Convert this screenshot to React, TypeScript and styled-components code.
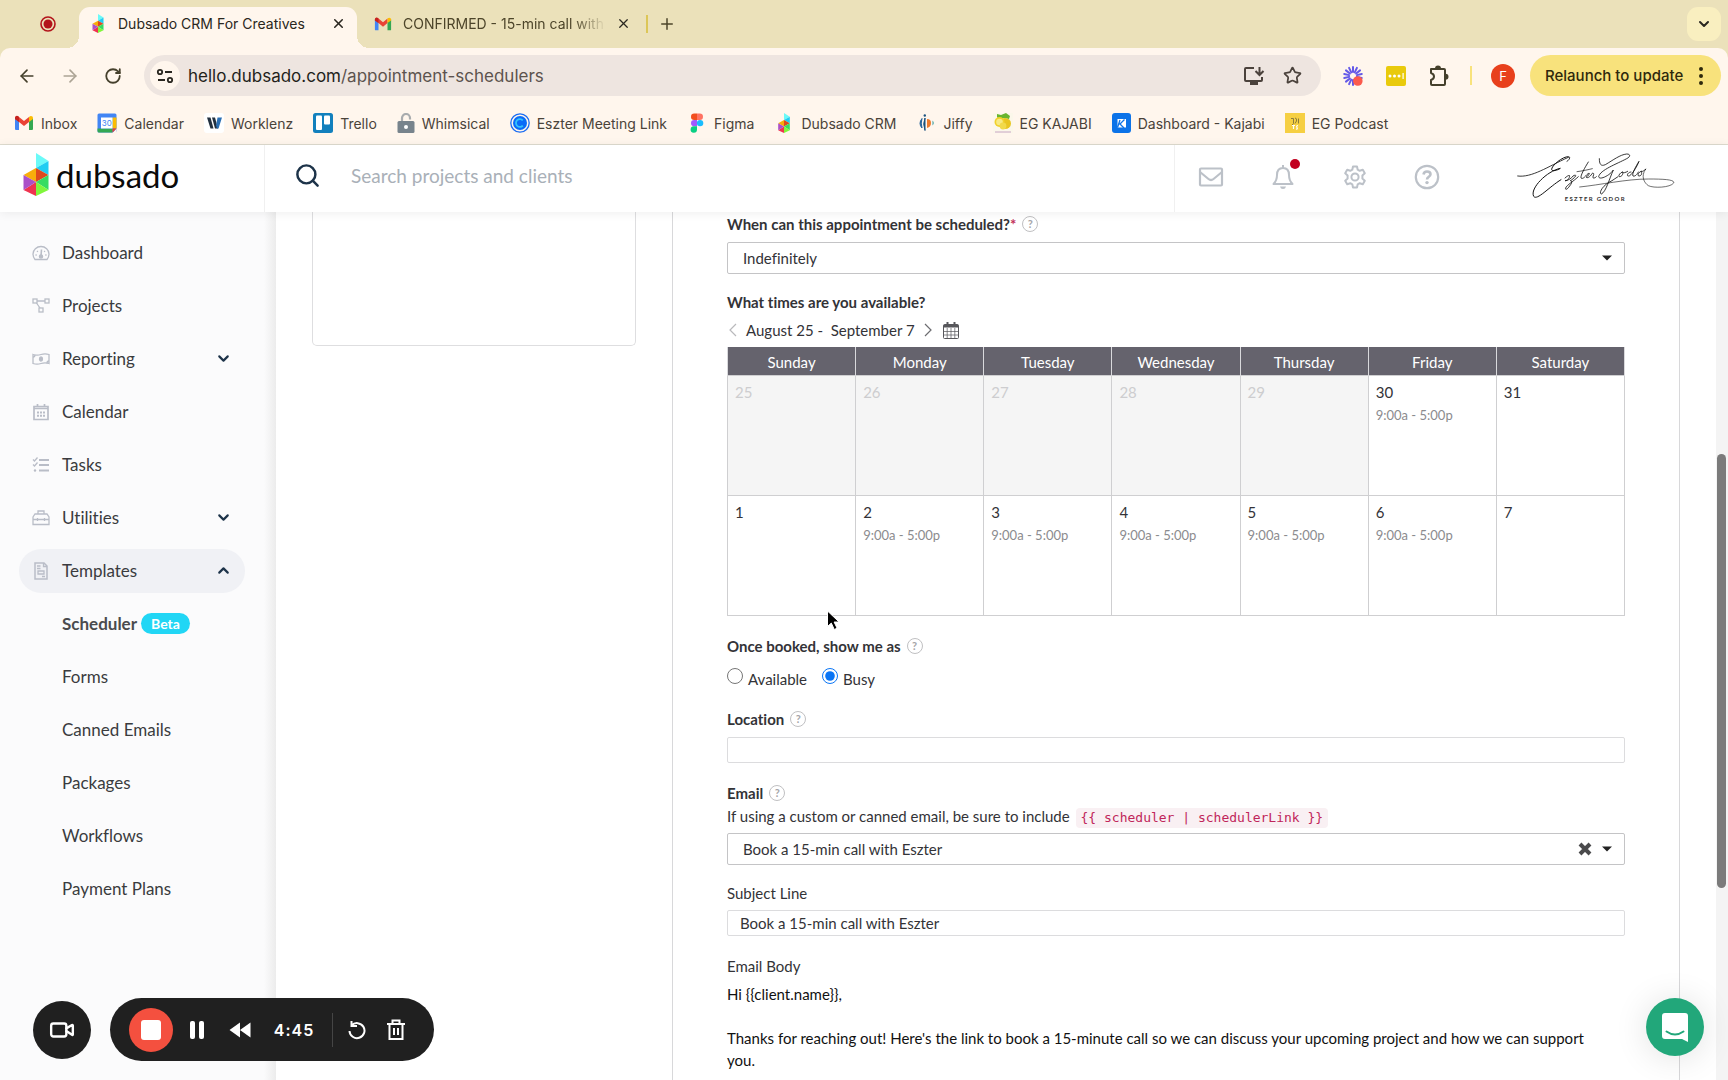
import React, { useState } from "react";
import styled, { createGlobalStyle, css } from "styled-components";
import {
  ArrowLeft, ArrowRight, RotateCw, X, Plus, ChevronDown, ChevronUp, Star, Search, Video,
} from "lucide-react";

const chromeFont = `Inter, "Liberation Sans", sans-serif`;
const pageFont = `Lato, "Open Sans", sans-serif`;

const GlobalStyle = createGlobalStyle`
  *, *::before, *::after { box-sizing: border-box; }
  body { margin: 0; overflow: hidden; background: #fff; }
  button, input, select { font: inherit; color: inherit; }
  button { border: 0; padding: 0; background: none; cursor: pointer; }
  a { color: inherit; text-decoration: none; }
`;

/* ---------- Browser chrome ---------- */

const Window = styled.div`
  display: flex;
  flex-direction: column;
  height: 100vh;
  font-family: ${chromeFont};
`;

const TabStrip = styled.div`
  display: flex;
  align-items: center;
  height: 48px;
  flex: none;
  padding-right: 7px;
  background: #ebe1ba;
`;

const RecordMark = styled.div`
  display: flex;
  justify-content: center;
  width: 79px;
  padding-left: 17px;
`;

const Tab = styled.div<{ $active?: boolean }>`
  position: relative;
  display: flex;
  align-items: center;
  align-self: flex-end;
  width: ${(p) => (p.$active ? 278 : 289)}px;
  height: 41px;
  padding: 0 ${(p) => (p.$active ? 11 : 15)}px 8px ${(p) => (p.$active ? 10 : 17)}px;
  font-size: 14px;
  color: ${(p) => (p.$active ? "#2a2720" : "#4d452a")};
  ${(p) =>
    p.$active &&
    css`
      background: #fff6ed;
      border-radius: 11px 11px 0 0;
      &::before, &::after {
        content: "";
        position: absolute;
        bottom: 0;
        width: 12px;
        height: 12px;
      }
      &::before { left: -12px; background: radial-gradient(circle at 0 0, transparent 12px, #fff6ed 12px); }
      &::after { right: -12px; background: radial-gradient(circle at 100% 0, transparent 12px, #fff6ed 12px); }
    `}
`;

const TabTitle = styled.span<{ $fade?: boolean }>`
  flex: 1;
  min-width: 0;
  margin-left: 11px;
  overflow: hidden;
  white-space: nowrap;
  ${(p) => p.$fade && css`mask-image: linear-gradient(90deg, #000 84%, transparent);`}
`;

const TabClose = styled.button`
  display: flex;
  margin-left: 10px;
  color: #2a2720;
`;

const StripDivider = styled.span`
  width: 2px;
  height: 18px;
  background: #dcc657;
`;

const NewTab = styled.button`
  display: flex;
  justify-content: center;
  width: 38px;
  color: #4d452a;
`;

const TabSearch = styled.button`
  display: flex;
  align-items: center;
  justify-content: center;
  width: 34px;
  height: 34px;
  margin-left: auto;
  border-radius: 11px;
  background: #f9efc0;
  color: #2a2720;
`;

const ToolbarBack = styled.div`
  flex: none;
  background: #ebe1ba;
`;

const Toolbar = styled.div`
  display: flex;
  align-items: center;
  height: 55px;
  padding: 0 7px 0 5px;
  background: #fff6ed;
  border-radius: 10px 10px 0 0;
`;

const ToolButton = styled.button<{ $muted?: boolean }>`
  display: flex;
  align-items: center;
  justify-content: center;
  width: 43px;
  height: 36px;
  flex: none;
  color: ${(p) => (p.$muted ? "#aca495" : "#45402c")};
`;

const Omnibox = styled.div`
  display: flex;
  align-items: center;
  flex: 1;
  height: 41px;
  margin: 0 10px;
  padding: 0 9px 0 6px;
  border-radius: 21px;
  background: #eee5e0;
`;

const SiteInfo = styled.button`
  display: flex;
  align-items: center;
  justify-content: center;
  width: 30px;
  height: 30px;
  border-radius: 50%;
  background: #fff6ed;
`;

const Address = styled.div`
  flex: 1;
  margin-left: 8px;
  font-size: 17px;
  color: #5c534e;
  white-space: nowrap;
  b { font-weight: 400; color: #231f1b; }
`;

const OmniButton = styled.button`
  display: flex;
  justify-content: center;
  width: 39px;
  color: #4b423c;
`;

const ToolDivider = styled.span`
  width: 2px;
  height: 19px;
  margin: 0 19px 0 10px;
  background: #f8e27c;
`;

const Avatar = styled.button`
  width: 24px;
  height: 24px;
  border-radius: 50%;
  background: #e8401c;
  color: #fff;
  font-size: 13px;
  line-height: 24px;
`;

const Relaunch = styled.button`
  display: flex;
  align-items: center;
  justify-content: space-between;
  width: 191px;
  height: 41px;
  margin-left: 15px;
  padding: 0 18px 0 15px;
  border-radius: 21px;
  background: #f8e27c;
  color: #2f290c;
  font-size: 15px;
  font-weight: 500;
  white-space: nowrap;
`;

const Bookmarks = styled.nav`
  display: flex;
  align-items: center;
  gap: 20px;
  flex: none;
  height: 42px;
  padding: 0 14px 1px;
  background: #fff6ed;
  border-bottom: 1px solid #dfdccf;
`;

const Bookmark = styled.a`
  display: flex;
  align-items: center;
  gap: 7px;
  font-size: 14px;
  color: #4a433a;
  white-space: nowrap;
  svg { flex: none; }
`;

/* ---------- Application header ---------- */

const Page = styled.div`
  display: flex;
  flex-direction: column;
  flex: 1;
  min-height: 0;
  font-family: ${pageFont};
  font-variant-ligatures: no-common-ligatures;
  color: #333337;
`;

const Header = styled.header`
  position: relative;
  z-index: 2;
  display: flex;
  flex: none;
  height: 67px;
  background: #fff;
  box-shadow: 0 1px 10px rgba(0, 0, 0, 0.07);
`;

const Brand = styled.a`
  display: flex;
  align-items: center;
  gap: 7px;
  width: 265px;
  padding: 0 0 8px 23px;
  border-right: 1px solid #f0f0f0;
  color: #0a0a0a;
  font-size: 33px;
  line-height: 36px;
`;

const SearchBox = styled.label`
  display: flex;
  align-items: center;
  flex: 1;
  padding: 0 0 6px 29px;
  color: #1d3349;
`;

const SearchInput = styled.input`
  flex: 1;
  height: 40px;
  margin-left: 30px;
  padding: 0;
  border: 0;
  outline: 0;
  background: none;
  font-size: 19px;
  &::placeholder { color: #a9b0b8; opacity: 1; }
`;

const HeaderTools = styled.div`
  display: flex;
  align-items: center;
  width: 554px;
  border-left: 1px solid #f0f0f0;
`;

const HeaderButton = styled.button`
  position: relative;
  display: flex;
  align-items: center;
  justify-content: center;
  width: 72px;
  height: 50px;
  padding-bottom: 4px;
  color: #bcc1c8;
`;

const AlertDot = styled.span`
  position: absolute;
  top: 5px;
  right: 19px;
  width: 10px;
  height: 10px;
  border-radius: 50%;
  background: #c2001f;
`;

const Signature = styled.svg`
  width: 180px;
  height: 65px;
  margin-left: 42px;
  text { font-family: ${pageFont}; font-size: 18px; font-weight: 700; letter-spacing: 4px; }
`;

/* ---------- Sidebar ---------- */

const Body = styled.div`
  display: flex;
  flex: 1;
  min-height: 0;
`;

const Sidebar = styled.nav`
  width: 276px;
  flex: none;
  padding-top: 14px;
  background: linear-gradient(90deg, #fbfbfc 264px, #ececec 276px);
`;

const NavList = styled.ul`
  margin: 0;
  padding: 0;
  list-style: none;
`;

const NavItem = styled.li`
  display: flex;
  align-items: center;
  height: 53px;
  padding: 0 31px 0 19px;
`;

const NavLink = styled.a<{ $open?: boolean; $current?: boolean }>`
  display: flex;
  align-items: center;
  width: 100%;
  height: 44px;
  padding: 0 13px;
  border-radius: 22px;
  background: ${(p) => (p.$open ? "#f0f1f5" : "none")};
  font-size: 17px;
  font-weight: ${(p) => (p.$current ? 700 : 400)};
  color: ${(p) => (p.$current ? "#4a4b4e" : "#3a3b3e")};
`;

const NavIcon = styled.span`
  display: flex;
  width: 18px;
  margin-right: 12px;
  color: #b9bdc7;
`;

const NavChevron = styled.span`
  display: flex;
  margin-left: auto;
  color: #1d3349;
`;

const Beta = styled.span`
  margin-left: 4px;
  padding: 0 10px;
  border-radius: 11px;
  background: #21d6f5;
  color: #fff;
  font-size: 14px;
  line-height: 21px;
`;

/* ---------- Main form ---------- */

const Main = styled.main`
  display: grid;
  grid-template-columns: 324px minmax(0, 1fr);
  gap: 36px;
  flex: 1;
  min-width: 0;
  overflow: hidden;
  padding: 0 36px;
  background: #fff;
`;

const ListCard = styled.section`
  height: 134px;
  border: 1px solid #dedee0;
  border-top: 0;
  border-radius: 0 0 5px 5px;
`;

const FormPanel = styled.form`
  padding: 1px 54px 0;
  border: solid #d8d8da;
  border-width: 0 1px;
  font-size: 15px;
  line-height: 22px;
`;

const Field = styled.div<{ $gap?: number; $after?: number }>`
  display: flex;
  flex-direction: column;
  gap: ${(p) => p.$gap ?? 7}px;
  margin-bottom: ${(p) => p.$after ?? 19}px;
`;

const LabelRow = styled.div<{ $bold?: boolean }>`
  display: flex;
  align-items: center;
  height: 22px;
  font-weight: ${(p) => (p.$bold ? 700 : 400)};
`;

const Required = styled.span`
  color: #c2305a;
`;

const HelpMark = styled.button`
  width: 16px;
  height: 16px;
  margin-left: 6px;
  border: 1px solid #c0c0c2;
  border-radius: 50%;
  color: #a5a5a8;
  font-size: 11px;
  line-height: 14px;
`;

const inputFrame = css`
  width: 100%;
  border-radius: 2px;
  background: #fff;
  outline: 0;
`;

const SelectWrap = styled.div`
  position: relative;
`;

const Select = styled.select`
  ${inputFrame}
  display: block;
  height: 32px;
  padding: 0 60px 0 15px;
  border: 1px solid #c4c4c6;
  appearance: none;
`;

const SelectTools = styled.div`
  position: absolute;
  top: 0;
  right: 13px;
  display: flex;
  align-items: center;
  gap: 10px;
  height: 32px;
  pointer-events: none;
  button { display: flex; pointer-events: auto; }
`;

const TextInput = styled.input`
  ${inputFrame}
  height: 26px;
  padding: 0 12px;
  border: 1px solid #dcdcde;
`;

const RangeRow = styled.div`
  display: flex;
  align-items: center;
  height: 24px;
`;

const RangeButton = styled.button<{ $muted?: boolean }>`
  display: flex;
  justify-content: center;
  width: 12px;
  color: ${(p) => (p.$muted ? "#b9b9bc" : "#6c6c70")};
`;

const RangeText = styled.span`
  margin: 0 7px;
  white-space: pre;
`;

const CalendarButton = styled.button`
  display: flex;
  margin-left: 9px;
`;

const Calendar = styled.table`
  width: 100%;
  table-layout: fixed;
  border-collapse: collapse;
`;

const DayHead = styled.th`
  height: 28px;
  padding: 3px 0 0;
  border: 1px solid #d9d9dc;
  border-width: 0 1px;
  background: #65636d;
  color: #fff;
  font-weight: 400;
`;

const DayCell = styled.td<{ $past?: boolean }>`
  height: 120px;
  padding: 5px 7px;
  border: 1px solid #cfcfd1;
  background: ${(p) => (p.$past ? "#f5f5f5" : "#fff")};
  color: ${(p) => (p.$past ? "#cdcdcf" : "#333337")};
  vertical-align: top;
`;

const Hours = styled.div`
  margin-top: 1px;
  color: #8b8b8e;
  font-size: 13px;
`;

const Choices = styled.div`
  display: flex;
  gap: 15px;
  height: 25px;
`;

const Choice = styled.label`
  display: flex;
  gap: 5px;
  padding-top: 4px;
`;

const Radio = styled.input`
  width: 16px;
  height: 16px;
  margin: 0;
  accent-color: #0a75f5;
`;

const Hint = styled.p`
  height: 22px;
  margin: 0 0 5px;
`;

const Code = styled.code`
  display: inline-block;
  margin-left: 2px;
  padding: 0 5px;
  border-radius: 4px;
  background: #f9f0f3;
  color: #c0255a;
  font-family: "DejaVu Sans Mono", monospace;
  font-size: 13px;
  line-height: 20px;
`;

const Message = styled.div`
  padding-right: 16px;
  color: #111;
  p { margin: 0 0 22px; }
`;

const ScrollTrack = styled.div`
  width: 12px;
  flex: none;
  background: #f4f4f4;
`;

const ScrollThumb = styled.div`
  width: 9px;
  height: 50%;
  margin: 242px 0 0 1px;
  border-radius: 5px;
  background: #7b7b7b;
`;

/* ---------- Floating tools ---------- */

const Recorder = styled.div`
  position: fixed;
  left: 33px;
  bottom: 19px;
  z-index: 5;
  display: flex;
  align-items: center;
  gap: 19px;
  color: #fff;
  font-family: ${chromeFont};
`;

const CameraButton = styled.button`
  display: flex;
  align-items: center;
  justify-content: center;
  width: 58px;
  height: 58px;
  border-radius: 50%;
  background: #202020;
  color: #fff;
`;

const RecorderBar = styled.div`
  display: flex;
  align-items: center;
  height: 63px;
  padding: 0 19px;
  border-radius: 32px;
  background: #202020;
`;

const StopButton = styled.button`
  display: flex;
  align-items: center;
  justify-content: center;
  width: 44px;
  height: 44px;
  border-radius: 50%;
  background: #f4503f;
  span { width: 20px; height: 20px; border-radius: 3px; background: #fff; }
`;

const BarButton = styled.button<{ $w: number }>`
  display: flex;
  justify-content: center;
  width: ${(p) => p.$w}px;
  color: #fff;
`;

const Timer = styled.span`
  width: 70px;
  text-align: center;
  font-size: 16px;
  font-weight: 600;
  letter-spacing: 1px;
`;

const BarDivider = styled.span`
  width: 1px;
  height: 34px;
  margin: 0 5px 0 3px;
  background: #454545;
`;

const ChatButton = styled.button`
  position: fixed;
  right: 24px;
  bottom: 24px;
  z-index: 5;
  display: flex;
  align-items: center;
  justify-content: center;
  width: 58px;
  height: 58px;
  border-radius: 50%;
  background: #22a77a;
  box-shadow: 0 2px 34px rgba(0, 0, 0, 0.12);
`;

const Pointer = styled.svg`
  position: fixed;
  left: 826px;
  top: 609px;
  z-index: 6;
  pointer-events: none;
`;

/* ---------- Drawings ---------- */

const DubsadoMark = ({ w, h }: { w: number; h: number }) => (
  <svg width={w} height={h} viewBox="0 0 25 43" aria-hidden="true">
    <path d="M12.5 0 25 8 12.5 15z" fill="#6bfaf8" />
    <path d="M25 8v14l-12.5-7z" fill="#20cdf2" />
    <path d="M0 22l12.5-7v14z" fill="#f8ad0b" />
    <path d="M12.5 15 25 22l-12.5 7z" fill="#de4a1e" />
    <path d="M25 22v15l-12.5-8z" fill="#36dc62" />
    <path d="M25 37l-12.5 6V29z" fill="#80f63c" />
    <path d="M12.5 43 0 37l12.5-8z" fill="#ef3350" />
    <path d="M0 37V22l12.5 7z" fill="#ab50c8" />
  </svg>
);

const GmailMark = ({ s }: { s: number }) => (
  <svg width={s} height={s} viewBox="0 0 20 20" aria-hidden="true">
    <path d="M1 5v11q0 1 1 1h3V8z" fill="#4285f4" />
    <path d="M19 5v11q0 1-1 1h-3V8z" fill="#34a853" />
    <path d="M1 5q0-2 2-2 1 0 2 1l5 4 5-4v5l-5 4-5-4-4-3z" fill="#ea4335" />
    <path d="M1 5v1l4 3V4Q3 2 1.600 3.400 1 4 1 5z" fill="#c5221f" />
    <path d="M15 4v5l4-3V5q0-2-2-2-1 0-2 1z" fill="#fbbc04" />
  </svg>
);

const CalendarMark = () => (
  <svg width="20" height="20" viewBox="0 0 20 20" aria-hidden="true">
    <rect x="0.500" y="0.500" width="19" height="19" rx="1.500" fill="#4285f4" />
    <path d="M15.500 4.500h4v11h-4z" fill="#fbbc04" />
    <path d="M.5 15.500h15v4H2q-1.500 0-1.500-1.500z" fill="#34a853" />
    <path d="M19.500 15.500v4.500h-4z" fill="#fff6ed" />
    <path d="M15.500 15.500h4l-4 4z" fill="#ea4335" />
    <path d="M4 4.500h11.500v11H4z" fill="#fff" />
    <text x="9.800" y="13" textAnchor="middle" fontSize="8" fontFamily="Inter, sans-serif" fill="#4285f4">30</text>
  </svg>
);

const WorklenzMark = () => (
  <svg width="20" height="20" viewBox="0 0 20 20" aria-hidden="true">
    <rect width="20" height="20" rx="3" fill="#fff" />
    <path d="M3 4.500h3.500l3 11H6.500z" fill="#22303f" />
    <path d="M8 4.500h3l3 11h-3z" fill="#22303f" />
    <path d="M13.500 4.500H18l-3.500 11h-1.600l-.8-3z" fill="#2b6fb3" />
  </svg>
);

const TrelloMark = () => (
  <svg width="20" height="20" viewBox="0 0 20 20" aria-hidden="true">
    <rect width="20" height="20" rx="2.500" fill="#1280bd" />
    <rect x="3" y="2.500" width="6" height="14.500" rx="1" fill="#fff" />
    <rect x="11" y="2.500" width="6" height="9" rx="1" fill="#fff" />
  </svg>
);

const LockMark = () => (
  <svg width="18" height="20" viewBox="0 0 18 20" aria-hidden="true">
    <path d="M5 8.500V5a4 4 0 0 1 8 0v1.500" fill="none" stroke="#a9acae" strokeWidth="2.200" />
    <rect x="0.500" y="8" width="17" height="12" rx="1.500" fill="#77838c" />
    <circle cx="9" cy="14" r="2" fill="#fff" />
  </svg>
);

const CalendlyMark = () => (
  <svg width="20" height="20" viewBox="0 0 20 20" fill="none" aria-hidden="true">
    <circle cx="10" cy="10" r="9.200" stroke="#1a6cf2" strokeWidth="1.300" />
    <circle cx="10" cy="10" r="7" fill="#0b6bf7" />
    <path d="M12.800 7.400A3.900 3.900 0 1 0 12.800 12.600" stroke="#35c3fb" strokeWidth="1.800" />
  </svg>
);

const FigmaMark = () => (
  <svg width="20" height="20" viewBox="0 0 20 20" aria-hidden="true">
    <path d="M10 .5H7.200a3.200 3.200 0 0 0 0 6.400H10z" fill="#f24e1e" />
    <path d="M10 .5h2.800a3.200 3.200 0 0 1 0 6.400H10z" fill="#ff7262" />
    <path d="M10 6.900H7.200a3.200 3.200 0 0 0 0 6.400H10z" fill="#a259ff" />
    <circle cx="13.100" cy="10.100" r="3.200" fill="#1abcfe" />
    <path d="M10 13.300H7.200a3.200 3.200 0 1 0 2.800 3.200z" fill="#0acf83" />
  </svg>
);

const JiffyMark = () => (
  <svg width="20" height="20" viewBox="0 0 20 20" aria-hidden="true">
    <path d="M6 5.500q-4 5 0 9.500-1.500-5 0-9.500z" fill="#25639b" stroke="#25639b" />
    <path d="M9 5q-2.500 5.500 0 12.500z" fill="#1b527f" stroke="#1b527f" />
    <circle cx="8.800" cy="2.500" r="1.200" fill="#1b527f" />
    <path d="M11 6q4 0 4 4t-4 5z" fill="#ef7b2d" />
    <path d="M16.500 7.500q2.500 2.500 0 5z" fill="#3b9b9b" />
  </svg>
);

const LemonMark = () => (
  <svg width="20" height="20" viewBox="0 0 20 20" aria-hidden="true">
    <rect width="20" height="20" fill="#fbf7ea" />
    <path d="M4 1l4 1 5-2 4 3-1 3-5-1-5 2-2-3z" fill="#69b52f" />
    <ellipse cx="12" cy="10.500" rx="6" ry="5.500" fill="#e9c520" />
    <circle cx="6.500" cy="9" r="5" fill="#f1d12b" />
    <circle cx="6.500" cy="9" r="3.300" fill="#f8ea84" />
    <circle cx="10" cy="13" r="3.400" fill="#f1d94a" />
    <path d="M2 19h16" stroke="#c8a6c4" strokeWidth="1" />
  </svg>
);

const KajabiMark = () => (
  <svg width="19" height="20" viewBox="0 0 19 20" aria-hidden="true">
    <rect width="19" height="20" rx="3" fill="#0c73e8" />
    <rect x="5.500" y="6" width="8.500" height="8.500" fill="#fff" />
    <path d="M8 7l-2.500 7.500M7.500 11.500 12.500 6.500M8 11l4 4" stroke="#0c73e8" strokeWidth="1.300" fill="none" />
  </svg>
);

const PodcastMark = () => (
  <svg width="20" height="20" viewBox="0 0 20 20" aria-hidden="true">
    <rect width="20" height="20" fill="#f6cf42" />
    <path d="M6 5.500h2.500v5L7 12M10 5q2 0 1.500 3L10 10.500M13.500 5.500v5" stroke="#8a7c3c" strokeWidth="1" fill="none" />
    <path d="M7 12.500h3M8.500 12.500V16M13 12.500q-2 0-1 2t-1 1.500" stroke="#fff" strokeWidth="1.200" fill="none" />
  </svg>
);

const InstallIcon = () => (
  <svg width="22" height="20" viewBox="0 0 22 20" fill="none" stroke="currentColor" strokeWidth="2" aria-hidden="true">
    <path d="M11 2H3q-1 0-1 1v11q0 1 1 1h15q1 0 1-1v-3" />
    <path d="M7 17.500h8" strokeWidth="3" />
    <path d="M16.500 1v8m-4-4 4 4 4-4" />
  </svg>
);

const TuneIcon = () => (
  <svg width="18" height="16" viewBox="0 0 18 16" fill="none" stroke="#2a2720" strokeWidth="1.800" aria-hidden="true">
    <circle cx="4" cy="4" r="2.200" /><path d="M9 4h7M2 12h7" /><circle cx="14" cy="12" r="2.200" />
  </svg>
);

const LoomMark = () => (
  <svg width="20" height="20" viewBox="0 0 20 20" aria-hidden="true">
    <g stroke="#6459e8" strokeWidth="2" strokeLinecap="round">
      {Array.from({ length: 14 }, (_, i) => (
        <path key={i} d="M10 6V1" transform={`rotate(${(i * 360) / 14} 10 10)`} />
      ))}
    </g>
    <circle cx="14.800" cy="15" r="4.800" fill="#fb5a4c" />
  </svg>
);

const DotsMark = () => (
  <svg width="20" height="20" viewBox="0 0 20 20" aria-hidden="true">
    <rect width="20" height="20" rx="2" fill="#e9ca0c" />
    <g fill="#fff"><circle cx="4" cy="10" r="1.500" /><circle cx="8.500" cy="10" r="1.500" /><circle cx="13" cy="10" r="1.500" /><path d="M16.500 7h1.200v6h-1.200z" /></g>
  </svg>
);

const PuzzleIcon = () => (
  <svg width="22" height="22" viewBox="0 0 22 22" fill="none" stroke="currentColor" strokeWidth="2" strokeLinejoin="round" aria-hidden="true">
    <path d="M3 4h13q1 0 1 1v14q0 1-1 1H4q-1 0-1-1v-4q3-1 3-3.500T3 8z" />
    <path d="M8 3.500a2 2 0 0 1 4 0M17.500 9.800a2 2 0 0 1 0 4" fill="currentColor" />
  </svg>
);

const EnvelopeIcon = () => (
  <svg width="26" height="22" viewBox="0 0 26 22" fill="none" stroke="currentColor" strokeWidth="2.200" strokeLinejoin="round" aria-hidden="true">
    <rect x="2" y="2.500" width="22" height="17" rx="1" />
    <path d="M2 6l8.500 7q2.500 2 5 0L24 6" />
  </svg>
);

const BellIcon = () => (
  <svg width="24" height="26" viewBox="0 0 24 26" fill="none" stroke="currentColor" strokeWidth="2" strokeLinejoin="round" aria-hidden="true">
    <path d="M12 1v3M12 4c-4 0-6 3-6 7 0 5-1.500 7-3.500 9h19c-2-2-3.500-4-3.500-9 0-4-2-7-6-7z" />
    <path d="M9 22.500h6q-.5 2.500-3 2.500t-3-2.500z" fill="currentColor" stroke="none" />
  </svg>
);

const GearIcon = () => (
  <svg width="24" height="26" viewBox="0 0 24 24" fill="none" stroke="currentColor" strokeWidth="2" strokeLinejoin="round" aria-hidden="true">
    <circle cx="12" cy="12" r="3.600" />
    <path d="M10 1.500h4l.7 3.200 2 1.100 3.100-1 2 3.500-2.400 2.200v3l2.400 2.200-2 3.500-3.100-1-2 1.100-.7 3.200h-4l-.7-3.200-2-1.100-3.100 1-2-3.500 2.400-2.200v-3L2.200 8.300l2-3.500 3.100 1 2-1.100z" />
  </svg>
);

const QuestionIcon = () => (
  <svg width="26" height="26" viewBox="0 0 26 26" fill="none" stroke="currentColor" strokeWidth="2.200" aria-hidden="true">
    <circle cx="13" cy="13" r="11.200" />
    <path d="M9.500 10.500q.5-3 3.500-3 3.500 0 3.500 2.800 0 1.500-1.800 2.500-1.700 1-1.700 2.700" strokeWidth="2.600" />
    <circle cx="13" cy="18.600" r="1.700" fill="currentColor" stroke="none" />
  </svg>
);

const navGlyphs: Record<string, React.ReactNode> = {
  Dashboard: (
    <>
      <path d="M3 15.500q-2-2.500-2-5.500a8 7.500 0 0 1 16 0q0 3-2 5.500z" />
      <path d="M9.500 5.500 9 12" strokeWidth="1.600" /><circle cx="9" cy="12.500" r="1.600" fill="currentColor" />
      <path d="M3.500 11h1.200M13.300 11h1.200M5 7l.9.900M13 7l-.9.900" />
    </>
  ),
  Projects: (
    <><rect x="1" y="2" width="4" height="4" /><rect x="13" y="2" width="4" height="4" /><rect x="7" y="11" width="4" height="4" /><path d="M5 4h8M4.500 6l3.500 5" /></>
  ),
  Reporting: (
    <><path d="M1 4.500q4 1.300 8 0t8 0v9q-4-1.300-8 0t-8 0z" /><ellipse cx="9" cy="9" rx="1.500" ry="2" fill="currentColor" /><path d="M1 7q2 0 2-2.200M17 11q-2 0-2 2.200" /></>
  ),
  Calendar: (
    <><path d="M2 3.500h14v13H2zM2 5.500h14M5.500 1v3M12.500 1v3" strokeWidth="1.700" /><path d="M5 9.500h2M8 9.500h2M11 9.500h2M5 12.800h2M8 12.800h2M11 12.800h2" strokeWidth="2" /></>
  ),
  Tasks: (
    <><path d="M7 4h10M7 9h10M7 14.500h10" strokeWidth="1.800" /><path d="M1 3.500 2.500 5l3-3.500M1 8.500 2.500 10l3-3.500" /><circle cx="3" cy="14.500" r="1.200" fill="currentColor" stroke="none" /></>
  ),
  Utilities: (
    <><path d="M1 8l2-3h12l2 3v7.500H1zM6 5V2h6v3M1 10.500h16M5.500 9v3M12.500 9v3" /></>
  ),
  Templates: (
    <><path d="M3 1h9l3 3v13H3z" strokeWidth="1.500" /><path d="M11.500 1v3.500H15M5 4h3.500M5 6.500h3.500M6 9h6v3H6zM10 14.500h3" /></>
  ),
};

const NavGlyph = ({ name }: { name: string }) => (
  <svg width="18" height="18" viewBox="0 0 18 18" fill="none" stroke="currentColor" strokeWidth="1.300" aria-hidden="true">
    {navGlyphs[name]}
  </svg>
);

const MonthIcon = () => (
  <svg width="16" height="17" viewBox="0 0 16 17" fill="none" stroke="#57575b" aria-hidden="true">
    <rect x="0.500" y="2.500" width="15" height="14" rx="1" />
    <path d="M1 3h14v2H1z" fill="#57575b" />
    <path d="M4.500 0v4M11.500 0v4" stroke="#57575b" strokeWidth="2" />
    <path d="M.5 9.500h15M.5 13h15M4.200 6v10M8 6v10M11.800 6v10" strokeWidth="0.700" />
  </svg>
);

const AngleIcon = ({ right }: { right?: boolean }) => (
  <svg width="8" height="14" viewBox="0 0 8 14" fill="none" stroke="currentColor" strokeWidth="1.200" aria-hidden="true">
    <path d={right ? "M1 1l6 6-6 6" : "M7 1 1 7l6 6"} />
  </svg>
);

const Caret = () => (
  <svg width="10" height="6" viewBox="0 0 10 6" aria-hidden="true"><path d="M0 .5h10L5 5.500z" fill="#222" /></svg>
);

const ClearIcon = () => (
  <svg width="14" height="14" viewBox="0 0 14 14" aria-hidden="true">
    <path d="M2 2l10 10M12 2 2 12" stroke="#4a4a4c" strokeWidth="4" />
  </svg>
);

const SignatureDrawing = () => (
  <Signature viewBox="0 0 540 195" fill="none" stroke="#111" strokeWidth="2.500" strokeLinecap="round" role="img" aria-label="Eszter Godor">
    <path d="M38 90C80 96 128 62 190 34c8-4 4 8-4 12" />
    <path d="M190 32c-16-2-52 28-50 39 2 6 17 2 26-4-40 8-92 60-80 84 10 14 46-28 82-50" strokeWidth="3" />
    <path d="M180 96c6-6 14-10 14-6 0 6-8 16-14 14 10 0 20-8 24-14 6-4 10-2 8 0-4 6-12 12-16 14 6 0 6 6-2 16-8 12-14 12-12 6 2-8 26-22 38-34" />
    <path d="M250 48c-10 16-24 40-22 48 4 4 10-2 14-6 8-10 14-10 10-4-6 6-10 6-8 8 6 4 14-6 18-12 0-2 6 0 4 4-2 6-4 10 0 10s6-2 8-4" />
    <path d="M216 77c16-2 34-6 46-9" strokeWidth="2" />
    <path d="M283 38c0 16 4 24 18 18 24-14 44-30 64-32 12 0 12 8 0 14-30 16-80 34-84 54 2 12 34-4 44-20-12 26-22 66-36 72-8-2 2-26 32-40l18-12" />
    <path d="M352 78c-8 2-14 14-8 14 8 0 12-12 8-14 2 4 10 2 16-2M378 78c-10 0-14 12-8 12 8 2 26-28 32-44-10 16-22 38-18 44 6 2 12-4 16-12M408 76c-8 2-12 14-6 14 8 0 10-10 6-14 6 2 10-4 14-6" />
    <path d="M224 123c60-6 140-24 206-24 50 0 80 2 76 12-10 14-60 16-76 8-12-8-24-28-8-50" strokeWidth="1.800" />
    <text x="179" y="166" fill="#333" stroke="none">ESZTER GODOR</text>
  </Signature>
);

/* ---------- Data ---------- */

const bookmarks: [string, React.ReactNode][] = [
  ["Inbox", <GmailMark s={20} />],
  ["Calendar", <CalendarMark />],
  ["Worklenz", <WorklenzMark />],
  ["Trello", <TrelloMark />],
  ["Whimsical", <LockMark />],
  ["Eszter Meeting Link", <CalendlyMark />],
  ["Figma", <FigmaMark />],
  ["Dubsado CRM", <DubsadoMark w={20} h={20} />],
  ["Jiffy", <JiffyMark />],
  ["EG KAJABI", <LemonMark />],
  ["Dashboard - Kajabi", <KajabiMark />],
  ["EG Podcast", <PodcastMark />],
];

const navItems: { name: string; icon?: boolean; chevron?: "down" | "up"; beta?: boolean }[] = [
  { name: "Dashboard", icon: true },
  { name: "Projects", icon: true },
  { name: "Reporting", icon: true, chevron: "down" },
  { name: "Calendar", icon: true },
  { name: "Tasks", icon: true },
  { name: "Utilities", icon: true, chevron: "down" },
  { name: "Templates", icon: true, chevron: "up" },
  { name: "Scheduler", beta: true },
  { name: "Forms" },
  { name: "Canned Emails" },
  { name: "Packages" },
  { name: "Workflows" },
  { name: "Payment Plans" },
];

const dayNames = ["Sunday", "Monday", "Tuesday", "Wednesday", "Thursday", "Friday", "Saturday"];
const open = "9:00a - 5:00p";
const weeks: { day: number; past?: boolean; hours?: string }[][] = [
  [
    { day: 25, past: true }, { day: 26, past: true }, { day: 27, past: true }, { day: 28, past: true },
    { day: 29, past: true }, { day: 30, hours: open }, { day: 31 },
  ],
  [
    { day: 1 }, { day: 2, hours: open }, { day: 3, hours: open }, { day: 4, hours: open },
    { day: 5, hours: open }, { day: 6, hours: open }, { day: 7 },
  ],
];

const Help = () => <HelpMark type="button" aria-label="Help">?</HelpMark>;

export default function App() {
  const [showAs, setShowAs] = useState("busy");
  const [location, setLocation] = useState("");
  const [subject, setSubject] = useState("Book a 15-min call with Eszter");

  return (
    <>
      <GlobalStyle />
      <Window>
        <TabStrip>
          <RecordMark>
            <svg width="16" height="16" viewBox="0 0 16 16" aria-hidden="true">
              <circle cx="8" cy="8" r="7" fill="none" stroke="#b3141b" strokeWidth="1.600" />
              <circle cx="8" cy="8" r="4.500" fill="#b3141b" />
            </svg>
          </RecordMark>
          <Tab $active>
            <DubsadoMark w={18} h={19} />
            <TabTitle>Dubsado CRM For Creatives</TabTitle>
            <TabClose aria-label="Close tab"><X size={15} strokeWidth={2.5} /></TabClose>
          </Tab>
          <Tab>
            <GmailMark s={18} />
            <TabTitle $fade>CONFIRMED - 15-min call with Eszter</TabTitle>
            <TabClose aria-label="Close tab"><X size={15} strokeWidth={2} /></TabClose>
          </Tab>
          <StripDivider />
          <NewTab aria-label="New tab"><Plus size={18} strokeWidth={2} /></NewTab>
          <TabSearch aria-label="Search tabs"><ChevronDown size={16} strokeWidth={3} /></TabSearch>
        </TabStrip>

        <ToolbarBack>
          <Toolbar>
            <ToolButton aria-label="Back"><ArrowLeft size={20} /></ToolButton>
            <ToolButton $muted aria-label="Forward"><ArrowRight size={20} /></ToolButton>
            <ToolButton aria-label="Reload"><RotateCw size={18} strokeWidth={2.4} /></ToolButton>
            <Omnibox>
              <SiteInfo aria-label="Site information"><TuneIcon /></SiteInfo>
              <Address><b>hello.dubsado.com</b>/appointment-schedulers</Address>
              <OmniButton aria-label="Install"><InstallIcon /></OmniButton>
              <OmniButton aria-label="Bookmark"><Star size={19} strokeWidth={2.2} /></OmniButton>
            </Omnibox>
            <ToolButton aria-label="Loom"><LoomMark /></ToolButton>
            <ToolButton aria-label="Password manager"><DotsMark /></ToolButton>
            <ToolButton aria-label="Extensions"><PuzzleIcon /></ToolButton>
            <ToolDivider />
            <Avatar>F</Avatar>
            <Relaunch>
              Relaunch to update
              <svg width="4" height="18" viewBox="0 0 4 18" fill="currentColor" aria-hidden="true">
                <circle cx="2" cy="2" r="2" /><circle cx="2" cy="9" r="2" /><circle cx="2" cy="16" r="2" />
              </svg>
            </Relaunch>
          </Toolbar>
        </ToolbarBack>

        <Bookmarks>
          {bookmarks.map(([name, icon]) => (
            <Bookmark key={name} href="#">{icon}{name}</Bookmark>
          ))}
        </Bookmarks>

        <Page>
          <Header>
            <Brand href="#"><DubsadoMark w={26} h={43} />dubsado</Brand>
            <SearchBox>
              <Search size={27} strokeWidth={2.2} />
              <SearchInput aria-label="Search projects and clients" placeholder="Search projects and clients" />
            </SearchBox>
            <HeaderTools>
              <HeaderButton aria-label="Messages"><EnvelopeIcon /></HeaderButton>
              <HeaderButton aria-label="Notifications"><BellIcon /><AlertDot /></HeaderButton>
              <HeaderButton aria-label="Settings"><GearIcon /></HeaderButton>
              <HeaderButton aria-label="Help"><QuestionIcon /></HeaderButton>
              <SignatureDrawing />
            </HeaderTools>
          </Header>

          <Body>
            <Sidebar>
              <NavList>
                {navItems.map((item) => (
                  <NavItem key={item.name}>
                    <NavLink href="#" $open={item.chevron === "up"} $current={item.beta}>
                      <NavIcon>{item.icon && <NavGlyph name={item.name} />}</NavIcon>
                      {item.name}
                      {item.beta && <Beta>Beta</Beta>}
                      {item.chevron && (
                        <NavChevron>
                          {item.chevron === "up" ? <ChevronUp size={17} strokeWidth={3} /> : <ChevronDown size={17} strokeWidth={3} />}
                        </NavChevron>
                      )}
                    </NavLink>
                  </NavItem>
                ))}
              </NavList>
            </Sidebar>

            <Main>
              <ListCard />
              <FormPanel onSubmit={(e) => e.preventDefault()}>
                <Field $after={17}>
                  <LabelRow $bold>
                    <label htmlFor="when">When can this appointment be scheduled?<Required>*</Required></label>
                    <Help />
                  </LabelRow>
                  <SelectWrap>
                    <Select id="when"><option>Indefinitely</option></Select>
                    <SelectTools><Caret /></SelectTools>
                  </SelectWrap>
                </Field>

                <Field $gap={5}>
                  <LabelRow $bold>What times are you available?</LabelRow>
                  <RangeRow>
                    <RangeButton type="button" $muted aria-label="Previous"><AngleIcon /></RangeButton>
                    <RangeText>{"August 25 -  September 7"}</RangeText>
                    <RangeButton type="button" aria-label="Next"><AngleIcon right /></RangeButton>
                    <CalendarButton type="button" aria-label="Pick dates"><MonthIcon /></CalendarButton>
                  </RangeRow>
                  <Calendar>
                    <thead>
                      <tr>{dayNames.map((d) => <DayHead key={d}>{d}</DayHead>)}</tr>
                    </thead>
                    <tbody>
                      {weeks.map((week, i) => (
                        <tr key={i}>
                          {week.map((c) => (
                            <DayCell key={c.day} $past={c.past}>
                              {c.day}
                              {c.hours && <Hours>{c.hours}</Hours>}
                            </DayCell>
                          ))}
                        </tr>
                      ))}
                    </tbody>
                  </Calendar>
                </Field>

                <Field>
                  <LabelRow $bold>Once booked, show me as<Help /></LabelRow>
                  <Choices>
                    <Choice>
                      <Radio type="radio" name="show" checked={showAs === "available"} onChange={() => setShowAs("available")} />
                      Available
                    </Choice>
                    <Choice>
                      <Radio type="radio" name="show" checked={showAs === "busy"} onChange={() => setShowAs("busy")} />
                      Busy
                    </Choice>
                  </Choices>
                </Field>

                <Field>
                  <LabelRow $bold><label htmlFor="location">Location</label><Help /></LabelRow>
                  <TextInput id="location" value={location} onChange={(e) => setLocation(e.target.value)} />
                </Field>

                <Field $gap={1} $after={17}>
                  <LabelRow $bold><label htmlFor="email">Email</label><Help /></LabelRow>
                  <Hint>
                    If using a custom or canned email, be sure to include <Code>{"{{ scheduler | schedulerLink }}"}</Code>
                  </Hint>
                  <SelectWrap>
                    <Select id="email"><option>Book a 15-min call with Eszter</option></Select>
                    <SelectTools>
                      <button type="button" aria-label="Clear"><ClearIcon /></button>
                      <Caret />
                    </SelectTools>
                  </SelectWrap>
                </Field>

                <Field $gap={6}>
                  <LabelRow><label htmlFor="subject">Subject Line</label></LabelRow>
                  <TextInput id="subject" value={subject} onChange={(e) => setSubject(e.target.value)} />
                </Field>

                <Field $gap={6}>
                  <LabelRow>Email Body</LabelRow>
                  <Message>
                    <p>{"Hi {{client.name}},"}</p>
                    <p>
                      Thanks for reaching out! Here's the link to book a 15-minute call so we can discuss your upcoming
                      project and how we can support you.
                    </p>
                  </Message>
                </Field>
              </FormPanel>
            </Main>
            <ScrollTrack><ScrollThumb /></ScrollTrack>
          </Body>
        </Page>
      </Window>

      <Recorder>
        <CameraButton aria-label="Camera"><Video size={26} strokeWidth={2.200} /></CameraButton>
        <RecorderBar>
          <StopButton aria-label="Stop"><span /></StopButton>
          <BarButton $w={48} aria-label="Pause">
            <svg width="16" height="18" viewBox="0 0 16 18" fill="currentColor"><rect x="1" width="5" height="18" rx="2" /><rect x="10" width="5" height="18" rx="2" /></svg>
          </BarButton>
          <BarButton $w={38} aria-label="Rewind">
            <svg width="22" height="16" viewBox="0 0 22 16" fill="currentColor"><path d="M11 .5v15L.5 8zM21.500 .5v15L11 8z" /></svg>
          </BarButton>
          <Timer>4:45</Timer>
          <BarDivider />
          <BarButton $w={38} aria-label="Restart">
            <svg width="18" height="20" viewBox="0 0 18 20" fill="none" stroke="currentColor" strokeWidth="2"><path d="M3.500 5.500A7.500 7.500 0 1 1 1.500 11M3.500 1v5h5.500" /></svg>
          </BarButton>
          <BarButton $w={39} aria-label="Delete">
            <svg width="20" height="22" viewBox="0 0 20 22" fill="none" stroke="currentColor" strokeWidth="2"><path d="M1 5h18M3.500 5v15h13V5M6.500 4.500V1.500h7v3M8 9v7M12 9v7" /></svg>
          </BarButton>
        </RecorderBar>
      </Recorder>

      <ChatButton aria-label="Open chat">
        <svg width="26" height="29" viewBox="0 0 26 29" aria-hidden="true">
          <path d="M3 0h20q3 0 3 3v26l-6-3H3q-3 0-3-3V3q0-3 3-3z" fill="#fff" />
          <path d="M4.500 18.500q8.500 6 17 0" fill="none" stroke="#22a77a" strokeWidth="2" strokeLinecap="round" />
        </svg>
      </ChatButton>

      <Pointer width="16" height="24" viewBox="0 0 16 24" aria-hidden="true">
        <path d="M1.500 2v15.500l3.800-3.400 3 6.400 2.800-1.300-3-6.200h5z" fill="#000" stroke="#fff" strokeWidth="1" />
      </Pointer>
    </>
  );
}
